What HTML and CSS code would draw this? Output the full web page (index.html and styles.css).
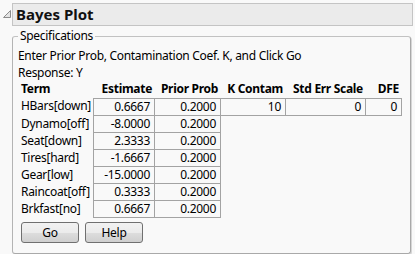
FILE: index.html
```html
<!DOCTYPE html>
<html>
<head>
<meta charset="utf-8">
<link rel="stylesheet" href="styles.css">
</head>
<body>
<div class="report">
  <div class="head">
    <svg class="tri" width="10" height="10" viewBox="0 0 10 10"><path d="M8.5 1.5 L8.5 8.5 L1.5 8.5 Z" fill="#e4e4e4" stroke="#8c8c8c" stroke-width="1"/></svg>
    <div class="title">Bayes Plot</div>
  </div>
  <fieldset class="group">
    <legend class="legend">Specifications</legend>
    <div class="line">Enter Prior Prob, Contamination Coef. K, and Click Go</div>
    <div class="line">Response: Y</div>
    <div class="grid">
      <div class="th l">Term</div>
      <div class="th">Estimate</div>
      <div class="th">Prior Prob</div>
      <div class="th">K Contam</div>
      <div class="th">Std Err Scale</div>
      <div class="th">DFE</div>

      <div class="term">HBars[down]</div>
      <div class="c est first">0.6667</div>
      <div class="c first">0.2000</div>
      <div class="c first">10</div>
      <div class="c first">0</div>
      <div class="c first">0</div>

      <div class="term">Dynamo[off]</div>
      <div class="c est">-8.0000</div>
      <div class="c">0.2000</div>
      <div class="e"></div><div class="e"></div><div class="e"></div>

      <div class="term">Seat[down]</div>
      <div class="c est">2.3333</div>
      <div class="c">0.2000</div>
      <div class="e"></div><div class="e"></div><div class="e"></div>

      <div class="term">Tires[hard]</div>
      <div class="c est">-1.6667</div>
      <div class="c">0.2000</div>
      <div class="e"></div><div class="e"></div><div class="e"></div>

      <div class="term">Gear[low]</div>
      <div class="c est">-15.0000</div>
      <div class="c">0.2000</div>
      <div class="e"></div><div class="e"></div><div class="e"></div>

      <div class="term">Raincoat[off]</div>
      <div class="c est">0.3333</div>
      <div class="c">0.2000</div>
      <div class="e"></div><div class="e"></div><div class="e"></div>

      <div class="term">Brkfast[no]</div>
      <div class="c est">0.6667</div>
      <div class="c">0.2000</div>
      <div class="e"></div><div class="e"></div><div class="e"></div>
    </div>
    <div class="buttons">
      <button class="btn">Go</button>
      <button class="btn">Help</button>
    </div>
  </fieldset>
</div>
</body>
</html>
```
FILE: styles.css
```css
html, body {
  margin: 0;
  padding: 0;
  background: #f9f9f9;
}
body {
  font-family: "Noto Sans", "Open Sans", sans-serif;
  font-size: 12px;
  letter-spacing: -0.3px;
  color: #000;
}
.report {
  padding: 3px 2px 0 2px;
}
.head {
  display: flex;
  align-items: flex-start;
}
.tri {
  display: block;
  margin-top: 6px;
  flex: none;
}
.title {
  box-sizing: border-box;
  width: 401px;
  height: 23px;
  background: #ebebeb;
  border: 1px solid #c4c4c4;
  font-weight: bold;
  font-size: 15px;
  letter-spacing: 0;
  line-height: 20px;
  padding-left: 3px;
  color: #111;
}
.group {
  box-sizing: border-box;
  width: 399px;
  min-height: 225px;
  margin: 3px 0 0 10px;
  padding: 4px 5px 10px 5px;
  border: 1px solid #a9a9a9;
  border-top-color: #c2c2c2;
  border-left-color: #b4b4b4;
  border-radius: 3px;
  box-shadow: 1px 1px 0 #d6d6d6;
}
.legend {
  padding: 0 2px;
  line-height: 14px;
  font-size: 12px;
}
.line {
  line-height: 17px;
  white-space: nowrap;
}
.grid {
  display: grid;
  grid-template-columns: 72px 62px 66px 65px 80px 36px;
  grid-template-rows: 17px 18px repeat(6, 17px);
  margin-left: 3px;
}
.grid > div {
  box-sizing: border-box;
  line-height: 16px;
  white-space: nowrap;
}
.th {
  font-weight: bold;
  text-align: right;
  padding-right: 3px;
}
.th.l {
  text-align: left;
  padding-right: 0;
}
.term {
  text-align: left;
}
.c {
  text-align: right;
  padding-right: 4px;
  border-right: 1px solid #a3a3a3;
  border-bottom: 1px solid #a3a3a3;
}
.c.first {
  border-top: 1px solid #a3a3a3;
}
.c.est {
  border-left: 1px solid #a3a3a3;
}
.buttons {
  display: flex;
  gap: 6px;
  margin: 4px 0 0 3px;
}
.btn {
  box-sizing: border-box;
  width: 58px;
  height: 21px;
  padding: 0;
  font-family: "Noto Sans", "Open Sans", sans-serif;
  font-size: 12px;
  letter-spacing: -0.3px;
  color: #000;
  border: 1px solid #707070;
  border-radius: 3px;
  background: linear-gradient(#f2f2f2, #ebebeb 50%, #dddddd 51%, #cfcfcf);
}
```
